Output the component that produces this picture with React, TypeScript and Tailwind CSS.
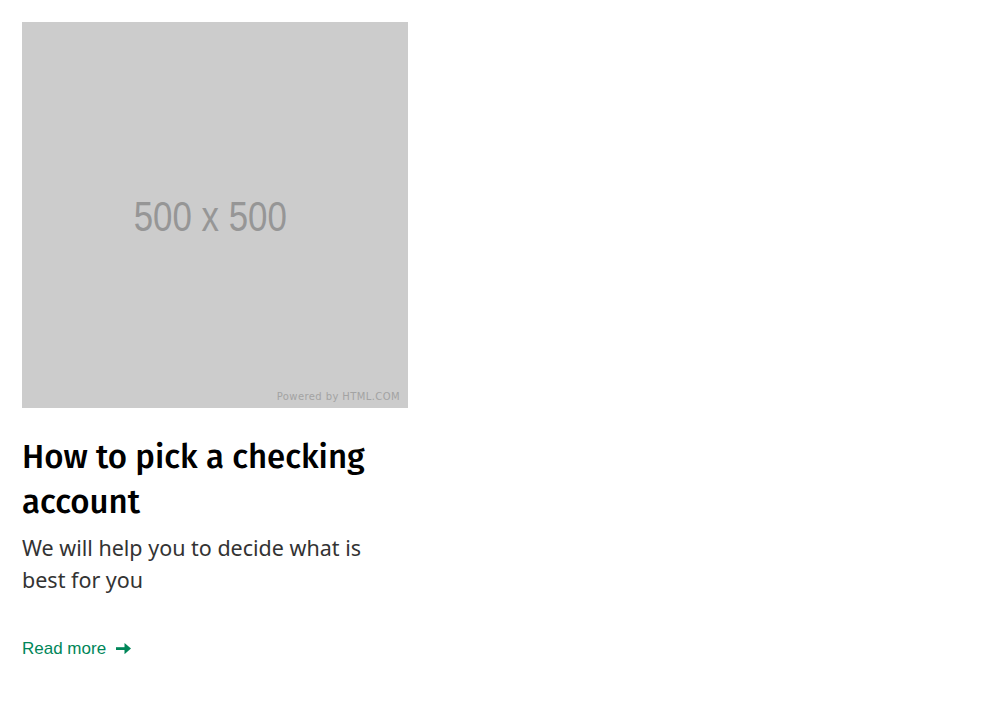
import React from 'react';

const ArticleCard: React.FC = () => {
  return (
    <div className="w-[386px]">
      {/* Placeholder image */}
      <div className="relative w-[386px] h-[386px] bg-[#cccccc] flex items-center justify-center">
        <span className="text-[42px] text-[#969696] font-['Liberation_Sans',Arial,sans-serif] -ml-[10px] mt-[3px] scale-x-[0.83]">
          500 x 500
        </span>
        <span className="absolute right-[8px] bottom-[4px] text-[10px] tracking-[0.4px] text-[#a3a3a3] font-['DejaVu_Sans',sans-serif]">
          Powered by HTML.COM
        </span>
      </div>

      <h2 className="mt-[27px] text-[33px] leading-[45px] font-medium text-black font-['Fira_Sans','Noto_Sans',sans-serif]">
        How to pick a checking account
      </h2>
      <p className="mt-[7px] pr-[10px] text-[21.5px] leading-[32px] text-[#333333] font-['Noto_Sans',sans-serif]">
        We will help you to decide what is best for you
      </p>

      <a
        href="#"
        className="mt-[40px] inline-flex items-center gap-[10px] text-[17px] text-[#008659] font-['Liberation_Sans',Arial,sans-serif]"
      >
        Read more
        <svg width="15" height="11" viewBox="0 0 15 11" fill="#008659">
          <rect x="0" y="4.2" width="10" height="2.8" />
          <path d="M8.5 0 L15 5.6 L8.5 11.2 Z" />
        </svg>
      </a>
    </div>
  );
};

const App: React.FC = () => {
  return (
    <div className="min-h-screen bg-white p-[22px]">
      <ArticleCard />
    </div>
  );
};

export default App;
